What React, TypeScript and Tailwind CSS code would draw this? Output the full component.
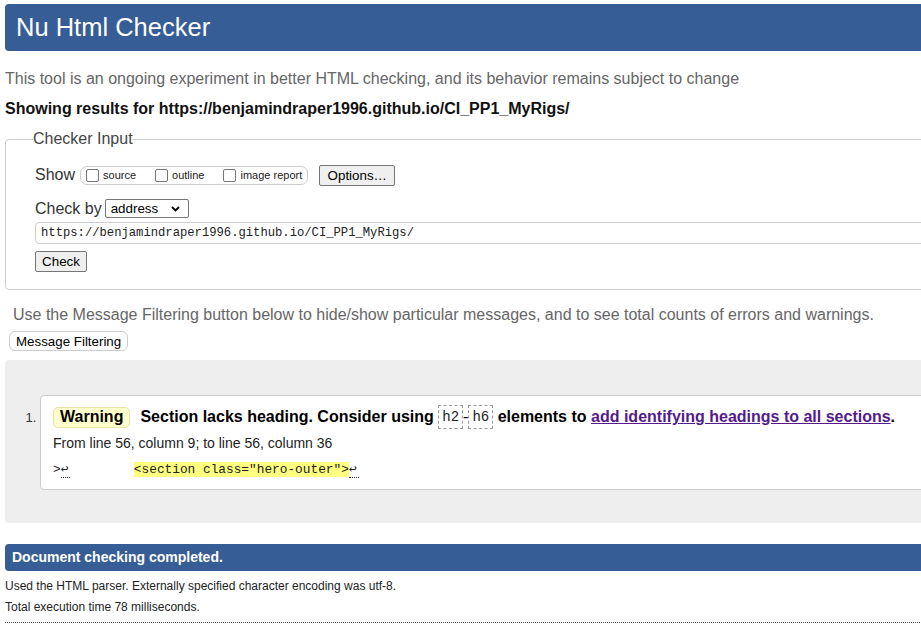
import React from "react";

const mono = "font-['Liberation_Mono','DejaVu_Sans_Mono',monospace]";

function CodeBox({ children }: { children: React.ReactNode }) {
  return (
    <code
      className={`${mono} inline-block text-[14px] leading-[22px] font-normal px-[3px] border border-dashed border-[#999] text-[#222]`}
    >
      {children}
    </code>
  );
}

function Check({ label }: { label: string }) {
  return (
    <label className="flex items-center text-[11px] text-[#222] mr-[19px] last:mr-0">
      <span className="inline-block w-[13px] h-[13px] border border-[#767676] rounded-[2px] bg-white mr-[4px]" />
      {label}
    </label>
  );
}

export default function App() {
  return (
    <div className="w-[921px] h-[632px] overflow-hidden bg-white font-['Liberation_Sans',Arial,sans-serif] text-black">
      <div className="w-[1000px] pl-[5px] pt-[4px]">
        <h1 className="h-[47px] bg-[#365d95] rounded-[4px] pl-[11px] flex items-center text-white text-[25.5px] leading-none">
          Nu Html Checker
        </h1>

        <p className="mt-[19px] text-[16px] leading-[18px] text-[#666]">
          This tool is an ongoing experiment in better HTML checking, and its behavior remains subject to change
        </p>
        <p className="mt-[12px] text-[16px] leading-[18px] font-bold text-[#111]">
          Showing results for https://benjamindraper1996.github.io/CI_PP1_MyRigs/
        </p>

        <fieldset className="mt-[12px] border border-[#ccc] rounded-[4px] pl-[29px] pb-[16px]">
          <legend className="-ml-[2px] text-[16px] leading-[18px] text-[#444]">Checker Input</legend>

          <div className="mt-[17px] flex items-center h-[20px]">
            <span className="text-[16px] text-[#333] mr-[5px]">Show</span>
            <div className="flex items-center h-[19px] border border-[#ccc] rounded-[7px] pl-[5px] pr-[5px]">
              <Check label="source" />
              <Check label="outline" />
              <Check label="image report" />
            </div>
            <button className="ml-[11px] h-[21px] w-[76px] text-[13.33px] bg-[#efefef] border border-[#767676] rounded-[2px] text-black">
              Options…
            </button>
          </div>

          <div className="mt-[14px] flex items-center h-[19px]">
            <span className="text-[16px] text-[#333] mr-[3px]">Check by</span>
            <div className="relative w-[84px] h-[19px] border border-[#767676] rounded-[2px] bg-white flex items-center pl-[5px] text-[13.33px]">
              address
              <svg className="absolute right-[8px] top-[6px]" width="9" height="6" viewBox="0 0 9 6">
                <path d="M1 1l3.5 3.5L8 1" fill="none" stroke="#000" strokeWidth="1.8" />
              </svg>
            </div>
          </div>

          <div
            className={`mt-[4px] h-[22px] border border-[#ccc] rounded-[4px] flex items-center pl-[5px] ${mono} text-[12.2px] text-[#222]`}
          >
            https://benjamindraper1996.github.io/CI_PP1_MyRigs/
          </div>

          <button className="mt-[7px] h-[21px] w-[52px] text-[13.33px] bg-[#efefef] border border-[#767676] rounded-[2px] text-black">
            Check
          </button>
        </fieldset>

        <p className="mt-[16px] pl-[8px] text-[16px] leading-[18px] text-[#666]">
          Use the Message Filtering button below to hide/show particular messages, and to see total counts of errors and warnings.
        </p>
        <button className="mt-[7px] ml-[4px] h-[20px] px-[6px] text-[13.33px] bg-white border border-[#ccc] rounded-[6px] text-black">
          Message Filtering
        </button>

        <div className="mt-[7px] bg-[#eee] rounded-[4px] pt-[35px] pb-[33px] pl-[35px]">
          <ol className="list-decimal list-outside text-[13px]">
            <li className="marker:text-[#333] marker:text-[13px]">
              <div className="bg-white border border-[#ccc] rounded-l-[4px] pt-[9px] pl-[12px] pb-[10px]">
                <p className="flex items-center h-[24px] text-[16px] font-bold whitespace-pre">
                  <span className="h-[21px] px-[6px] flex items-center bg-[#ffffcc] border border-[#e6e2a8] rounded-[5px]">
                    Warning
                  </span>
                  <span className="ml-[10px]">Section lacks heading. Consider using </span>
                  <CodeBox>h2</CodeBox>
                  <span className="font-normal">-</span>
                  <CodeBox>h6</CodeBox>
                  <span> elements to </span>
                  <a href="#" className="text-[#551a8b] underline">
                    add identifying headings to all sections
                  </a>
                  <span>.</span>
                </p>
                <p className="mt-[6px] text-[14px] leading-[16px] text-[#222]">
                  From line 56, column 9; to line 56, column 36
                </p>
                <p className={`mt-[10px] ${mono} text-[12.8px] leading-[18px] whitespace-pre text-[#222]`}>
                  <span>&gt;</span>
                  <span className="border-b border-dotted border-[#333] pr-[2px]">↩</span>
                  <span>{"        "}</span>
                  <span className="ml-[2px] bg-[#ffff80]">&lt;section class="hero-outer"&gt;</span>
                  <span className="border-b border-dotted border-[#333] pr-[2px]">↩</span>
                </p>
              </div>
            </li>
          </ol>
        </div>

        <h2 className="mt-[21px] h-[27px] bg-[#365d95] rounded-[4px] pl-[7px] flex items-center text-white text-[14px] font-bold">
          Document checking completed.
        </h2>
        <p className="mt-[8px] text-[12px] leading-[14px] text-[#222]">
          Used the HTML parser. Externally specified character encoding was utf-8.
        </p>
        <p className="mt-[7px] text-[12px] leading-[14px] text-[#222]">Total execution time 78 milliseconds.</p>
        <div className="mt-[8px] border-b border-dotted border-[#555]" />
      </div>
    </div>
  );
}
